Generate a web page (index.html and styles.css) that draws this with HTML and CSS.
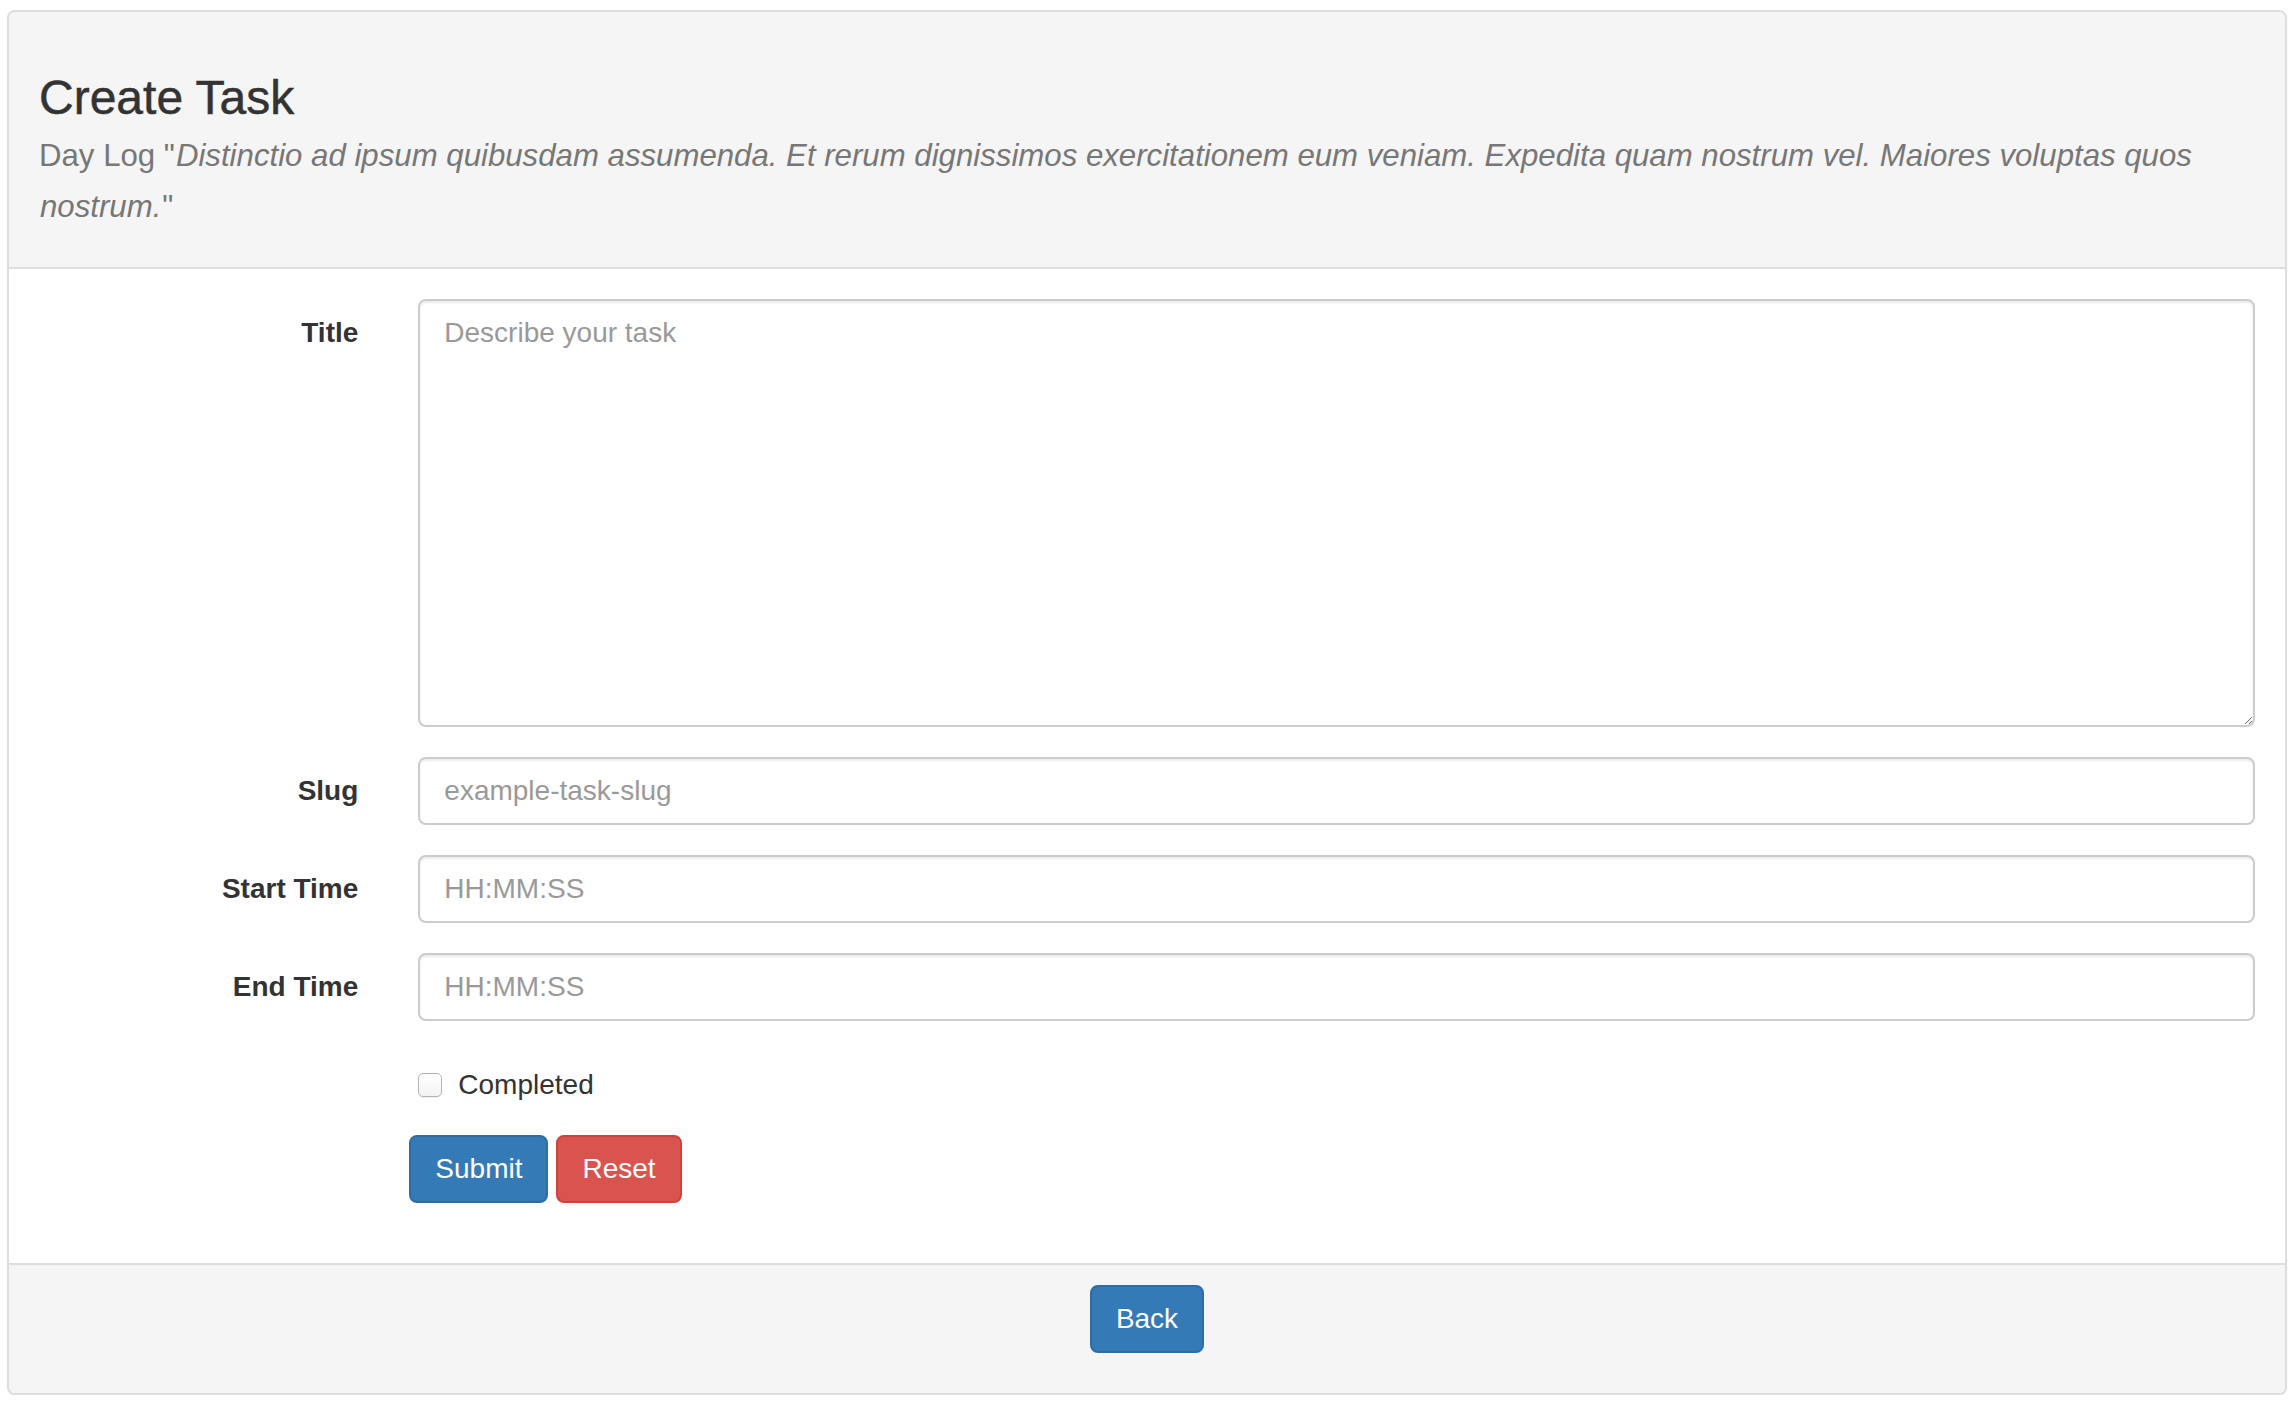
FILE: index.html
```html
<!DOCTYPE html>
<html lang="en">
<head>
<meta charset="utf-8">
<title>Create Task</title>
<link rel="stylesheet" href="styles.css">
</head>
<body>
<div class="panel">
  <div class="panel-heading">
    <h3 class="panel-title">Create Task</h3>
    <p class="subtitle">Day Log "<em>Distinctio ad ipsum quibusdam assumenda. Et rerum dignissimos exercitationem eum veniam. Expedita quam nostrum vel. Maiores voluptas quos</em> <em>nostrum.</em>"</p>
  </div>
  <form class="panel-body">
    <div class="form-group">
      <label class="control-label" for="title">Title</label>
      <div class="control"><textarea id="title" class="form-control textarea" rows="10" placeholder="Describe your task"></textarea></div>
    </div>
    <div class="form-group">
      <label class="control-label" for="slug">Slug</label>
      <div class="control"><input id="slug" class="form-control" type="text" placeholder="example-task-slug"></div>
    </div>
    <div class="form-group">
      <label class="control-label" for="start">Start Time</label>
      <div class="control"><input id="start" class="form-control" type="text" placeholder="HH:MM:SS"></div>
    </div>
    <div class="form-group">
      <label class="control-label" for="end">End Time</label>
      <div class="control"><input id="end" class="form-control" type="text" placeholder="HH:MM:SS"></div>
    </div>
    <div class="form-group">
      <div class="spacer"></div>
      <div class="control checkbox">
        <label class="check-label"><input type="checkbox" class="check"> <span>Completed</span></label>
      </div>
    </div>
    <div class="form-group">
      <div class="spacer"></div>
      <div class="control buttons">
        <button type="submit" class="btn btn-primary">Submit</button>
        <button type="reset" class="btn btn-danger">Reset</button>
      </div>
    </div>
  </form>
  <div class="panel-footer">
    <p class="back-wrap"><button type="button" class="btn btn-primary">Back</button></p>
  </div>
</div>
</body>
</html>
```

FILE: styles.css
```css
* { box-sizing: border-box; }

html, body {
  margin: 0;
  background: #fff;
}

body {
  padding: 10px 8px 0 7px;
  font-family: "Liberation Sans", Arial, Helvetica, sans-serif;
  font-size: 28px;
  line-height: 40px;
  color: #333;
}

.panel {
  border: 2px solid #ddd;
  border-radius: 8px;
  background: #fff;
  box-shadow: 0 2px 2px rgba(0, 0, 0, 0.05);
}

.panel-heading {
  background: #f5f5f5;
  border-bottom: 2px solid #ddd;
  border-radius: 6px 6px 0 0;
  padding: 20px 30px;
}

.panel-title {
  margin: 40px 0 0;
  font-size: 48px;
  line-height: 52.8px;
  font-weight: 500;
  color: #333;
  -webkit-text-stroke: 0.5px #333;
}

.subtitle {
  margin: 5px 0 14px;
  font-size: 31.2px;
  line-height: 51.5px;
  color: #777;
}

.subtitle em {
  font-style: italic;
  margin: 0 1px;
}

.panel-body {
  display: block;
  padding: 30px 0;
  margin: 0;
}

.form-group {
  display: grid;
  grid-template-columns: 16.6667% 83.3333%;
  margin-bottom: 30px;
}

.control-label {
  padding: 14px 30px 0;
  text-align: right;
  font-weight: bold;
  line-height: 40px;
  color: #333;
}

.control {
  padding: 0 30px;
}

.form-control {
  display: block;
  width: 100%;
  height: 68px;
  padding: 12px 24px;
  font-family: "Liberation Sans", Arial, Helvetica, sans-serif;
  font-size: 28px;
  line-height: 40px;
  color: #555;
  background: #fff;
  border: 2px solid #ccc;
  border-radius: 8px;
  box-shadow: inset 0 2px 2px rgba(0, 0, 0, 0.075);
  outline: none;
  margin: 0;
}

.form-control::placeholder {
  color: #999;
  opacity: 1;
}

.textarea {
  height: 428px;
  resize: vertical;
}

.checkbox {
  padding-top: 14px;
  min-height: 54px;
}

.check-label {
  display: flex;
  align-items: center;
  height: 40px;
  gap: 16px;
  color: #333;
  font-weight: normal;
}

.check {
  appearance: none;
  -webkit-appearance: none;
  width: 24px;
  height: 24px;
  margin: 0;
  border: 1.5px solid #b3b3b3;
  border-radius: 5px;
  background: linear-gradient(#ffffff, #f3f3f3);
  box-shadow: 0 1px 1px rgba(0, 0, 0, 0.06);
  flex: none;
}

.buttons {
  display: flex;
  gap: 8px;
  padding-left: 21px;
}

.btn {
  display: inline-block;
  padding: 12px 24px;
  font-family: "Liberation Sans", Arial, Helvetica, sans-serif;
  font-size: 28px;
  line-height: 40px;
  height: 68px;
  border: 2px solid transparent;
  border-radius: 8px;
  color: #fff;
  cursor: pointer;
  margin: 0;
}

.btn-primary {
  background: #337ab7;
  border-color: #2e6da4;
}

.btn-danger {
  background: #d9534f;
  border-color: #d43f3a;
}

.panel-footer {
  background: #f5f5f5;
  border-top: 2px solid #ddd;
  border-radius: 0 0 6px 6px;
  padding: 20px 30px;
}

.back-wrap {
  margin: 0 0 20px;
  text-align: center;
  line-height: 0;
}
```
